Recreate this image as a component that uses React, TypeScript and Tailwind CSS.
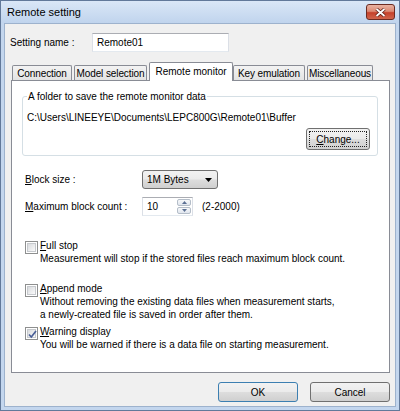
import React from "react";

const btnFace =
  "bg-[linear-gradient(#f2f2f2_0%,#ebebeb_48%,#dddddd_52%,#cfcfcf_100%)]";

function CheckBox({ checked }: { checked?: boolean }) {
  return (
    <span className="relative flex h-[13px] w-[13px] shrink-0 border border-[#8e8f8f] bg-white p-[1px]">
      <span className="h-full w-full border border-[#c6c9cd] bg-linear-to-br from-[#d9dbde] to-[#fafafa]" />
      {checked && (
        <svg
          className="absolute left-[1px] top-[1px]"
          width="11"
          height="11"
          viewBox="0 0 11 11"
        >
          <path
            d="M2 5.5 L4.3 8 L9 2"
            fill="none"
            stroke="#4a5f97"
            strokeWidth="1.7"
          />
        </svg>
      )}
    </span>
  );
}

function Option({
  access,
  rest,
  lines,
  checked,
  className,
}: {
  access: string;
  rest: string;
  lines: string[];
  checked?: boolean;
  className: string;
}) {
  return (
    <div className={"flex gap-[2px] " + className}>
      <div className="pt-[2px]">
        <CheckBox checked={checked} />
      </div>
      <div>
        <div>
          <span className="underline">{access}</span>
          {rest}
        </div>
        {lines.map((l) => (
          <div key={l}>{l}</div>
        ))}
      </div>
    </div>
  );
}

const tabs = [
  { label: "Connection", w: "w-[60px]", ml: "ml-0" },
  { label: "Model selection", w: "w-[73px]", ml: "ml-[2px]" },
  { label: "Remote monitor", w: "w-[84px]", ml: "ml-[2px]", active: true },
  { label: "Key emulation", w: "w-[72px]", ml: "ml-0" },
  { label: "Miscellaneous", w: "w-[66px]", ml: "ml-[2px]" },
];

export default function App() {
  return (
    <div className="flex h-[411px] w-[400px] flex-col border border-[#62799a] bg-[#c3d6ee] font-['Liberation_Sans',Arial,sans-serif] text-[10px] leading-[13px] text-black">
      {/* Title bar */}
      <div className="flex h-[22px] shrink-0 items-start justify-between bg-linear-to-b from-[#dae7f7] to-[#c0d4ed] pl-[6px] pr-[4px]">
        <span className="mt-[4px] text-[11px] leading-[14px]">Remote setting</span>
        <div className="mt-[3px] flex h-[16px] w-[29px] items-center justify-center rounded-[3px] border border-[#6b2b22] bg-[linear-gradient(#e9b2a2_0%,#dc8a74_45%,#c5412b_55%,#d0654c_100%)]">
          <svg width="11" height="9" viewBox="0 0 11 9">
            <path d="M1.5 1 L9.5 8 M9.5 1 L1.5 8" stroke="#5a1e17" strokeWidth="3.4" />
            <path d="M1.5 1 L9.5 8 M9.5 1 L1.5 8" stroke="#ffffff" strokeWidth="1.8" />
          </svg>
        </div>
      </div>

      {/* Client area */}
      <div className="mx-[3px] mb-[3px] flex flex-1 flex-col border border-[#9db2cd] bg-[#f0f0f0]">
        <div className="ml-[5px] mt-[9px] flex items-center">
          <span className="w-[82px]">Setting name :</span>
          <div className="flex h-[19px] w-[137px] items-center border border-[#abadb3] border-x-[#dbdfe6] border-b-[#e3e9ef] bg-white pl-[4px]">
            Remote01
          </div>
        </div>

        <div className="ml-[6px] mt-[10px] w-[379px]">
          {/* Tabs */}
          <div className="flex h-[18px] items-end pl-[1px]">
            {tabs.map((t) =>
              t.active ? (
                <div
                  key={t.label}
                  className={`${t.w} ${t.ml} relative z-10 -mb-px flex h-[19px] items-start justify-center rounded-t-[2px] border border-b-0 border-[#898c95] bg-white pt-[2px]`}
                >
                  {t.label}
                </div>
              ) : (
                <div
                  key={t.label}
                  className={`${t.w} ${t.ml} flex h-[15px] items-center justify-center rounded-t-[2px] border border-b-0 border-[#898c95] bg-linear-to-b from-[#f3f3f3] to-[#e3e3e3] tracking-[-0.1px]`}
                >
                  {t.label}
                </div>
              )
            )}
          </div>

          {/* Panel */}
          <div className="flex h-[293px] flex-col border border-[#898c95] bg-white">
            <fieldset className="ml-[10px] mt-[9px] flex w-[356px] flex-col rounded-[3px] border border-[#d5dfe5] pb-[5px] pl-[4px] pr-[7px]">
              <legend className="px-[1px]">A folder to save the remote monitor data</legend>
              <div className="mt-[8px]">C:\Users\LINEEYE\Documents\LEPC800G\Remote01\Buffer</div>
              <div
                className={`mt-[4px] flex h-[22px] w-[64px] self-end rounded-[3px] border border-[#707070] p-[2px] ${btnFace}`}
              >
                <span className="flex h-full w-full items-center justify-center border border-dotted border-[#222]">
                  <span>
                    <span className="underline">C</span>hange...
                  </span>
                </span>
              </div>
            </fieldset>

            <div className="ml-[13px] mt-[14px] flex h-[19px] items-center">
              <span className="w-[117px]">
                <span className="underline">B</span>lock size :
              </span>
              <div
                className={`flex h-[19px] w-[76px] items-center justify-between rounded-[3px] border border-[#707070] pl-[4px] pr-[5px] ${btnFace}`}
              >
                <span>1M Bytes</span>
                <svg width="7" height="4" viewBox="0 0 7 4">
                  <path d="M0 0h7L3.5 4z" fill="#000" />
                </svg>
              </div>
            </div>

            <div className="ml-[13px] mt-[8px] flex h-[19px] items-center">
              <span className="w-[117px]">
                <span className="underline">M</span>aximum block count :
              </span>
              <div className="flex h-[19px] w-[51px] border border-[#abadb3] border-x-[#dbdfe6] border-b-[#e3e9ef] bg-white">
                <span className="flex flex-1 items-center pl-[4px]">10</span>
                <div className="flex w-[16px] flex-col gap-[1px] p-[1px]">
                  <span className="flex flex-1 items-center justify-center rounded-[2px] border border-[#b4bdc8] bg-linear-to-b from-[#f7f8fa] to-[#e0e6ee]">
                    <svg width="5" height="3" viewBox="0 0 5 3">
                      <path d="M0 3h5L2.5 0z" fill="#5b6f93" />
                    </svg>
                  </span>
                  <span className="flex flex-1 items-center justify-center rounded-[2px] border border-[#b4bdc8] bg-linear-to-b from-[#f7f8fa] to-[#e0e6ee]">
                    <svg width="5" height="3" viewBox="0 0 5 3">
                      <path d="M0 0h5L2.5 3z" fill="#5b6f93" />
                    </svg>
                  </span>
                </div>
              </div>
              <span className="ml-[9px]">(2-2000)</span>
            </div>

            <Option
              className="ml-[13px] mt-[23px]"
              access="F"
              rest="ull stop"
              lines={["Measurement will stop if the stored files reach maximum block count."]}
            />
            <Option
              className="ml-[13px] mt-[17px]"
              access="A"
              rest="ppend mode"
              lines={[
                "Without removing the existing data files when measurement starts,",
                "a newly-created file is saved in order after them.",
              ]}
            />
            <Option
              className="ml-[13px] mt-[4px]"
              access="W"
              rest="arning display"
              checked
              lines={["You will be warned if there is a data file on starting measurement."]}
            />
          </div>
        </div>

        {/* Dialog buttons */}
        <div className="mt-[9px] flex justify-end gap-[12px] pr-[5px]">
          <div
            className={`flex h-[20px] w-[80px] items-center justify-center rounded-[3px] border border-[#3c7fb1] ${btnFace}`}
          >
            OK
          </div>
          <div
            className={`flex h-[20px] w-[80px] items-center justify-center rounded-[3px] border border-[#707070] ${btnFace}`}
          >
            Cancel
          </div>
        </div>
      </div>
    </div>
  );
}
